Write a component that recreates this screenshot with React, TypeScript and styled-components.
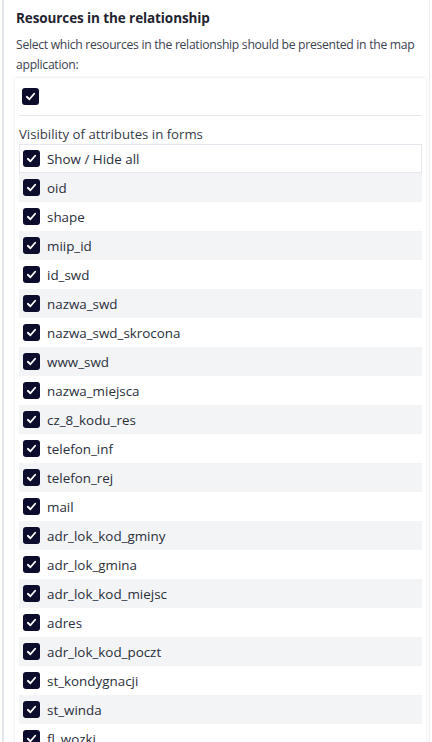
import { FunctionComponent } from 'react';
import styled, { createGlobalStyle } from 'styled-components';

const GlobalStyle = createGlobalStyle`
  html, body {
    margin: 0;
    padding: 0;
    background: #ffffff;
    font-family: 'Open Sans', 'Noto Sans', Arial, sans-serif;
    overflow: hidden;
  }
`;

const Page = styled.div`
  height: 742px;
  overflow: hidden;
  border-left: 2px solid #e3e7ee;
  margin-left: 2px;
  border-right: 1px solid #eceef2;
  margin-right: 2px;
  box-sizing: border-box;
  padding: 8px 0 0 11px;
`;

const Title = styled.h3`
  margin: 0 0 7px 0;
  font-size: 13.5px;
  font-weight: 700;
  color: #1f2430;
  line-height: 20px;
  padding-left: 1px;
  letter-spacing: -0.1px;
`;

const Description = styled.p`
  margin: 0 0 3px 0;
  font-size: 12.2px;
  color: #3b4250;
  line-height: 20px;
  padding-left: 1px;
  letter-spacing: -0.3px;
`;

const Card = styled.div`
  margin-right: 3px;
  background: #fff;
  box-shadow: 0 0 3px rgba(0, 0, 0, 0.12);
  padding: 10px 4px 0 4px;
`;

const TopRow = styled.div`
  padding: 0 3px 10px 3px;
  border-bottom: 1px solid #e5e7eb;
  display: flex;
  align-items: center;
`;

const Section = styled.div`
  font-size: 13.2px;
  color: #353b47;
  margin-top: 8px;
  line-height: 20px;
`;

const List = styled.div`
  display: flex;
  flex-direction: column;
`;

const Row = styled.div<{ shaded?: boolean; bordered?: boolean }>`
  height: 29px;
  box-sizing: border-box;
  display: flex;
  align-items: center;
  gap: 7px;
  padding-left: ${({ bordered }): string => (bordered ? '3px' : '4px')};
  background: ${({ shaded }): string => (shaded ? '#f3f4f6' : '#ffffff')};
  border: ${({ bordered }): string => (bordered ? '1px solid #e6e7ee' : 'none')};
  font-size: 13.4px;
  color: #2a2f3a;
`;

const Box = styled.span`
  width: 17px;
  height: 17px;
  border-radius: 3px;
  background: #0c0c2c;
  display: inline-flex;
  align-items: center;
  justify-content: center;
  flex-shrink: 0;
`;

const Check: FunctionComponent = () => (
  <Box>
    <svg width="11" height="11" viewBox="0 0 12 12">
      <path d="M2 6.3 L4.8 9 L10 3" stroke="#fff" strokeWidth="2" fill="none" strokeLinecap="round" strokeLinejoin="round" />
    </svg>
  </Box>
);

const fields = [
  'oid',
  'shape',
  'miip_id',
  'id_swd',
  'nazwa_swd',
  'nazwa_swd_skrocona',
  'www_swd',
  'nazwa_miejsca',
  'cz_8_kodu_res',
  'telefon_inf',
  'telefon_rej',
  'mail',
  'adr_lok_kod_gminy',
  'adr_lok_gmina',
  'adr_lok_kod_miejsc',
  'adres',
  'adr_lok_kod_poczt',
  'st_kondygnacji',
  'st_winda',
  'fl_wozki',
];

const App: FunctionComponent = () => (
  <>
    <GlobalStyle />
    <Page>
      <Title>Resources in the relationship</Title>
      <Description>
        Select which resources in the relationship should be presented in the map application:
      </Description>
      <Card>
        <TopRow>
          <Check />
        </TopRow>
        <Section>Visibility of attributes in forms</Section>
        <List>
          <Row bordered>
            <Check />
            <span>Show / Hide all</span>
          </Row>
          {fields.map((f, i) => (
            <Row key={f} shaded={i % 2 === 0}>
              <Check />
              <span>{f}</span>
            </Row>
          ))}
        </List>
      </Card>
    </Page>
  </>
);

export default App;
